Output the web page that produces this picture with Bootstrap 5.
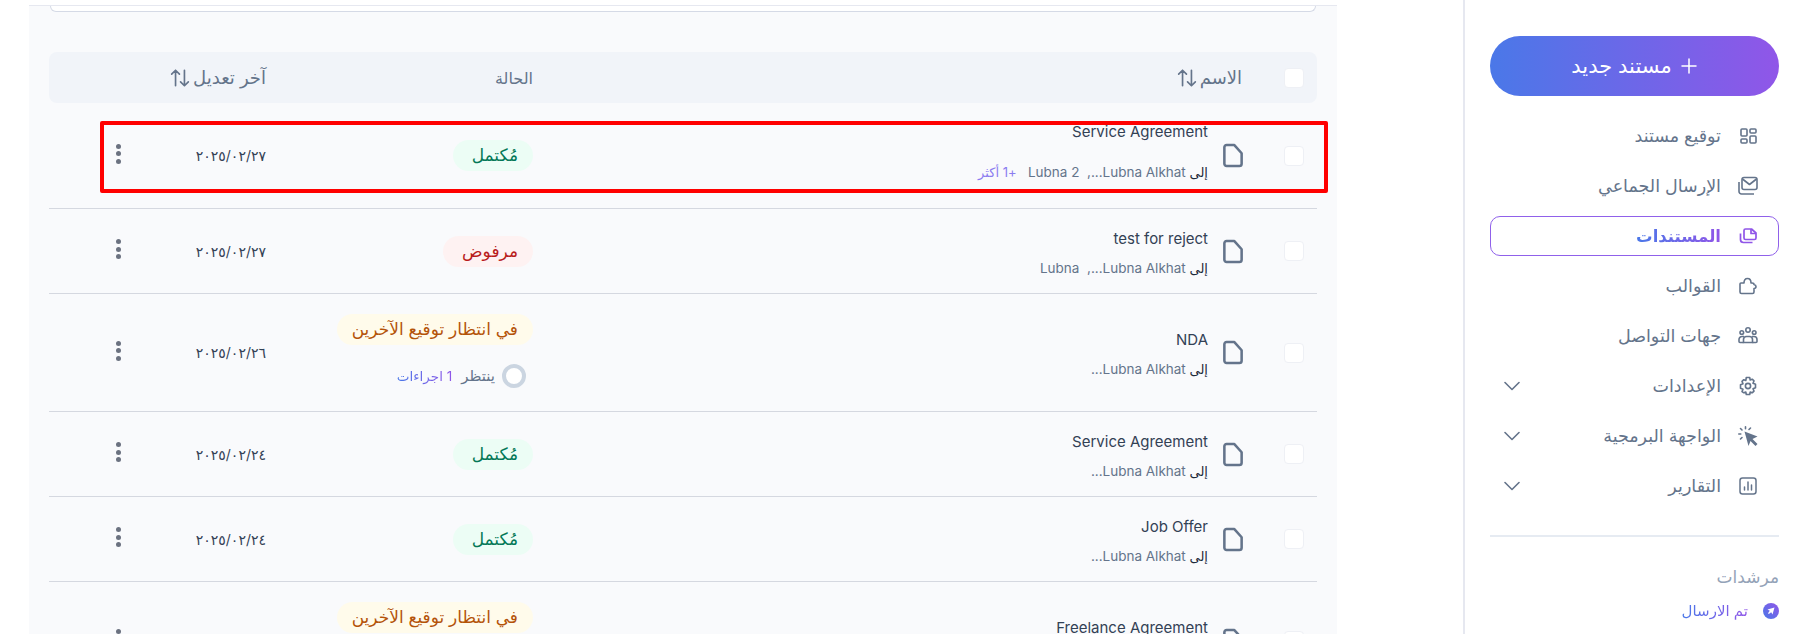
<!DOCTYPE html>
<html lang="ar" dir="rtl">
<head>
<meta charset="utf-8">
<title>المستندات</title>
<link rel="stylesheet" href="https://cdn.jsdelivr.net/npm/bootstrap@5.3.0/dist/css/bootstrap.min.css">
<style>
html,body{height:634px;overflow:hidden;background:#fff}
body{font-family:Inter,"Noto Sans","DejaVu Sans",sans-serif;font-size:16px;color:#334155}
.shell{height:634px}
.side{width:341px;flex:none;border-left:2px solid #e6e8f0;padding:36px 25px 0 25px}
.new-btn{height:60px;width:100%;border:0;border-radius:30px;color:#fff;font-size:21px;font-weight:400;background:linear-gradient(90deg,#4a78e8,#9056e8);margin-bottom:20px}
.new-btn svg{width:18px;height:18px}
.nav-row{height:40px;padding:0 20px 0 13px;color:#64748b;font-size:17.5px;border:1px solid transparent;border-radius:10px;margin-bottom:10px;text-decoration:none}
.nav-row .ico{width:20px;height:20px;flex:none;margin-left:17px}
.nav-row.is-on{border-color:#9061ea;font-weight:700;font-size:16.5px}
.grad-txt{background:linear-gradient(90deg,#4a78e8,#9056e8);-webkit-background-clip:text;background-clip:text;color:transparent}
.chev{width:16px;height:16px;margin-right:auto}
.side-sep{border-top:2px solid #e6ebf2;margin:29px 0 28px}
.side-label{color:#94a3b8;font-size:17px;letter-spacing:1px;line-height:24px;margin-bottom:12px}
.sent-row{font-size:15px;line-height:20px;gap:15px}
.sent-dot{width:16px;height:16px;flex:none}
.main-area{flex:1;padding:5px 126px 0 29px;min-width:0}
.panel{background:#f9fafc;border-top:1px solid #e6e8f0;padding:0 20px;height:640px}
.search-tail{height:6px;border:1px solid #d5dae6;border-top:0;border-radius:0 0 20px 20px;background:#fff;margin:0 1px 40px}
.head-row{height:51px;background:#f1f4f9;border-radius:8px;color:#64748b}
.doc-row{border-bottom:1px solid #d5d8e0;position:relative}
.h85{height:85px}.h106{height:106px}.h118{height:118px}
.c-check{width:46px;flex:none}
.box{display:block;width:20px;height:20px;background:#fff;border:1px solid #eef0f5;border-radius:4px}
.c-title{flex:1;min-width:0;padding-right:28px;gap:15px}
.file-ico{width:20px;height:25px;flex:none}
.name{font-size:15px;line-height:22px;color:#334155}
.sub{font-size:13.5px;line-height:20px;color:#64748b;margin-top:8px}
.txt-block{padding-top:3px}
.txt-wide{padding-top:0;padding-bottom:9px}
.sub .lead-word{color:#1e293b;font-size:13px}
.sub-wide{margin-top:19px}
.more{color:#8b7cf0;font-size:13px}
.c-status{width:267px;flex:none}
.c-date{width:116px;flex:none;color:#334155;font-size:14px}
.c-act{width:101px;flex:none;padding-right:29px}
.head-name{flex:1;padding-right:29px;font-size:18px}
.head-state{width:267px;flex:none}
.head-date{width:217px;flex:none;font-size:18px}
.pill-state{display:inline-block;height:31px;line-height:30px;border-radius:16px;padding:0 15px;font-size:17px}
.st-ok{background:#ecfdf5;color:#047857;padding-left:19px}
.st-no{background:#fef2f2;color:#b91c1c;padding-left:19px}
.st-wait{background:#fffbeb;color:#b45309}
.wait-line{margin:19px 0 4px;padding-right:7px;font-size:13.5px;line-height:24px;color:#64748b;gap:7px}
.wait-line .wait-word{font-size:15px;margin-left:2px}
.ring{width:24px;height:24px;border:4px solid #cbd5e1;border-radius:50%;background:#fff;flex:none}
.dots{width:5px;display:flex;flex-direction:column;gap:2.500px;margin-bottom:4px}
.dots i{display:block;width:5px;height:5px;border-radius:50%;background:#6b7280}
.sort{width:20px;height:20px;margin-right:3px;vertical-align:-4px}
.red-mark{position:absolute;top:18px;left:51px;right:-11px;height:72px;border:4px solid #f00;border-radius:2px;pointer-events:none}
</style>
</head>
<body>
<div class="d-flex shell">
<aside class="side">
  <button class="new-btn d-flex align-items-center justify-content-center gap-2" type="button">
    <svg viewBox="0 0 18 18" fill="none" stroke="#fff" stroke-width="1.5" stroke-linecap="round"><path d="M9 2v14M2 9h14"/></svg>
    <span>مستند جديد</span>
  </button>
  <a class="nav-row d-flex align-items-center" href="#"><svg class="ico" viewBox="0 0 20 20" fill="none" stroke="#64748b" stroke-width="1.6"><rect x="3" y="3" width="6" height="7" rx="1"/><rect x="12" y="3" width="6" height="4" rx="1"/><rect x="3" y="13" width="6" height="4" rx="1"/><rect x="12" y="10" width="6" height="7" rx="1"/></svg><span>توقيع مستند</span></a>
  <a class="nav-row d-flex align-items-center" href="#"><svg class="ico" viewBox="0 0 20 20" fill="none" stroke="#64748b" stroke-width="1.6" stroke-linejoin="round"><rect x="4" y="1.500" width="15" height="12" rx="2"/><path d="M4.500 3l7 5.500 7-5.500"/><path d="M1 6v9.500a2.500 2.500 0 0 0 2.500 2.500H16"/></svg><span>الإرسال الجماعي</span></a>
  <a class="nav-row is-on d-flex align-items-center" href="#"><svg class="ico" viewBox="0 0 20 20" fill="none" stroke="#9056e8" stroke-width="1.7" stroke-linejoin="round"><path d="M6 4.500a1.500 1.500 0 0 1 1.500-1.500h6l4.500 4v5a1.500 1.500 0 0 1-1.500 1.500h-9a1.500 1.500 0 0 1-1.500-1.500z"/><path d="M13 3v4.500h5"/><path d="M2.500 7.500v6a3 3 0 0 0 3 3h9"/></svg><span class="grad-txt">المستندات</span></a>
  <a class="nav-row d-flex align-items-center" href="#"><svg class="ico" viewBox="0 0 20 20" fill="none" stroke="#64748b" stroke-width="1.6" stroke-linejoin="round"><path d="M3.500 17.500Q2 17.500 2 16V8Q2 7 3 7H6Q6 2.500 9.500 2.500 13 2.500 13 7H14Q16 7 16 8.500 18 9 18 10.500 18 12.500 16 12.500V16Q16 17.500 14.500 17.500Z"/></svg><span>القوالب</span></a>
  <a class="nav-row d-flex align-items-center" href="#"><svg class="ico" viewBox="0 0 20 20" fill="none" stroke="#64748b" stroke-width="1.6"><circle cx="10" cy="4" r="2.200"/><circle cx="3.800" cy="6.500" r="1.800"/><circle cx="16.200" cy="6.500" r="1.800"/><path d="M5.500 16.500v-3a3 3 0 0 1 3-3h3a3 3 0 0 1 3 3v3z"/><path d="M5.500 16.500H2a1 1 0 0 1-1-1v-2a3 3 0 0 1 3-3h2M14.500 16.500H18a1 1 0 0 0 1-1v-2a3 3 0 0 0-3-3h-2"/></svg><span>جهات التواصل</span></a>
  <a class="nav-row d-flex align-items-center" href="#"><svg class="ico" viewBox="0 0 20 20" fill="none" stroke="#64748b" stroke-width="1.6" stroke-linejoin="round"><path d="M8.300 1.500h3.400l.5 2.500 2-.8 1.800 1.700-1 2.300 2.500 1v3.600l-2.500 1 1 2.300-1.800 1.700-2-.8-.5 2.500H8.300l-.5-2.500-2 .8L4 15.600l1-2.300-2.500-1V8.700l2.500-1-1-2.300 1.800-1.700 2 .8z"/><circle cx="10" cy="10" r="2.600"/></svg><span>الإعدادات</span><svg class="chev" viewBox="0 0 16 16" fill="none" stroke="#64748b" stroke-width="1.600" stroke-linecap="round" stroke-linejoin="round"><path d="M1 4.500l7 7 7-7"/></svg></a>
  <a class="nav-row d-flex align-items-center" href="#"><svg class="ico" viewBox="0 0 20 20"><path fill="#64748b" d="M6.500 5.500L19.500 10.500 14.500 13 19.500 18 17.500 20 12.500 15 10.500 20z"/><g stroke="#64748b" stroke-width="1.600" stroke-linecap="round"><path d="M7.500.8v2M2.500 2.500L4 4M.8 8h2M2.500 13L4 11.500M12.500 2L11 3.500"/></g></svg><span>الواجهة البرمجية</span><svg class="chev" viewBox="0 0 16 16" fill="none" stroke="#64748b" stroke-width="1.600" stroke-linecap="round" stroke-linejoin="round"><path d="M1 4.500l7 7 7-7"/></svg></a>
  <a class="nav-row d-flex align-items-center" href="#"><svg class="ico" viewBox="0 0 20 20" fill="none" stroke="#64748b" stroke-width="1.500" stroke-linecap="round"><rect x="2" y="2" width="16" height="16" rx="2.500"/><path d="M6.500 14v-3M10 14V6M13.500 14V9"/></svg><span>التقارير</span><svg class="chev" viewBox="0 0 16 16" fill="none" stroke="#64748b" stroke-width="1.600" stroke-linecap="round" stroke-linejoin="round"><path d="M1 4.500l7 7 7-7"/></svg></a>
  <div class="side-sep"></div>
  <div class="side-label">مرشدات</div>
  <div class="sent-row d-flex align-items-center"><svg class="sent-dot" viewBox="0 0 16 16"><defs><linearGradient id="gd" x1="1" y1="0" x2="0" y2="1"><stop offset="0" stop-color="#9056e8"/><stop offset="1" stop-color="#4a78e8"/></linearGradient></defs><circle cx="8" cy="8" r="8" fill="url(#gd)"/><path fill="#fff" d="M4.500 6.500L11.500 4.500 9.500 11.500 8.200 9.200 5.800 11 5 10.200 6.800 7.800z"/></svg><span class="grad-txt">تم الارسال</span></div>
</aside>

<main class="main-area">
<div class="panel">
  <div class="search-tail"></div>
  <div class="head-row d-flex align-items-center">
    <div class="c-check d-flex justify-content-center"><span class="box"></span></div>
    <div class="head-name">الاسم<svg class="sort" viewBox="0 0 18 18" fill="none" stroke="#64748b" stroke-width="1.500" stroke-linecap="round" stroke-linejoin="round"><path d="M5 16V2M1.500 5.500L5 2l3.500 3.500M13 2v14M9.500 12.500L13 16l3.500-3.500"/></svg></div>
    <div class="head-state">الحالة</div>
    <div class="head-date">آخر تعديل<svg class="sort" viewBox="0 0 18 18" fill="none" stroke="#64748b" stroke-width="1.500" stroke-linecap="round" stroke-linejoin="round"><path d="M5 16V2M1.500 5.500L5 2l3.500 3.500M13 2v14M9.500 12.500L13 16l3.500-3.500"/></svg></div>
  </div>

  <div class="doc-row h106 d-flex align-items-center">
    <div class="c-check d-flex justify-content-center"><span class="box"></span></div>
    <div class="c-title d-flex align-items-center">
      <svg class="file-ico" viewBox="0 0 22 26" fill="none" stroke="#64748b" stroke-width="2.800" stroke-linejoin="round"><path d="M4 1.500h8.500l8 9V22a2.500 2.500 0 0 1-2.500 2.500H4A2.500 2.500 0 0 1 1.500 22V4A2.500 2.500 0 0 1 4 1.500z"/></svg>
      <div class="txt-wide"><div class="name">Service Agreement</div><div class="sub sub-wide"><span class="lead-word">إلى</span> <span dir="ltr">Lubna 2 &nbsp;,...Lubna Alkhat</span> &nbsp; <span class="more">+1 أكثر</span></div></div>
    </div>
    <div class="c-status"><span class="pill-state st-ok">مُكتمل</span></div>
    <div class="c-date">٢٠٢٥/٠٢/٢٧</div>
    <div class="c-act"><div class="dots"><i></i><i></i><i></i></div></div>
    <div class="red-mark"></div>
  </div>

  <div class="doc-row h85 d-flex align-items-center">
    <div class="c-check d-flex justify-content-center"><span class="box"></span></div>
    <div class="c-title d-flex align-items-center">
      <svg class="file-ico" viewBox="0 0 22 26" fill="none" stroke="#64748b" stroke-width="2.800" stroke-linejoin="round"><path d="M4 1.500h8.500l8 9V22a2.500 2.500 0 0 1-2.500 2.500H4A2.500 2.500 0 0 1 1.500 22V4A2.500 2.500 0 0 1 4 1.500z"/></svg>
      <div class="txt-block"><div class="name">test for reject</div><div class="sub"><span class="lead-word">إلى</span> <span dir="ltr">Lubna &nbsp;,...Lubna Alkhat</span></div></div>
    </div>
    <div class="c-status"><span class="pill-state st-no">مرفوض</span></div>
    <div class="c-date">٢٠٢٥/٠٢/٢٧</div>
    <div class="c-act"><div class="dots"><i></i><i></i><i></i></div></div>
  </div>

  <div class="doc-row h118 d-flex align-items-center">
    <div class="c-check d-flex justify-content-center"><span class="box"></span></div>
    <div class="c-title d-flex align-items-center">
      <svg class="file-ico" viewBox="0 0 22 26" fill="none" stroke="#64748b" stroke-width="2.800" stroke-linejoin="round"><path d="M4 1.500h8.500l8 9V22a2.500 2.500 0 0 1-2.500 2.500H4A2.500 2.500 0 0 1 1.500 22V4A2.500 2.500 0 0 1 4 1.500z"/></svg>
      <div class="txt-block"><div class="name">NDA</div><div class="sub"><span class="lead-word">إلى</span> <span dir="ltr">...Lubna Alkhat</span></div></div>
    </div>
    <div class="c-status"><span class="pill-state st-wait">في انتظار توقيع الآخرين</span><div class="wait-line d-flex align-items-center"><span class="ring"></span><span class="wait-word">ينتظر</span><span class="grad-txt">1 اجراءات</span></div></div>
    <div class="c-date">٢٠٢٥/٠٢/٢٦</div>
    <div class="c-act"><div class="dots"><i></i><i></i><i></i></div></div>
  </div>

  <div class="doc-row h85 d-flex align-items-center">
    <div class="c-check d-flex justify-content-center"><span class="box"></span></div>
    <div class="c-title d-flex align-items-center">
      <svg class="file-ico" viewBox="0 0 22 26" fill="none" stroke="#64748b" stroke-width="2.800" stroke-linejoin="round"><path d="M4 1.500h8.500l8 9V22a2.500 2.500 0 0 1-2.500 2.500H4A2.500 2.500 0 0 1 1.500 22V4A2.500 2.500 0 0 1 4 1.500z"/></svg>
      <div class="txt-block"><div class="name">Service Agreement</div><div class="sub"><span class="lead-word">إلى</span> <span dir="ltr">...Lubna Alkhat</span></div></div>
    </div>
    <div class="c-status"><span class="pill-state st-ok">مُكتمل</span></div>
    <div class="c-date">٢٠٢٥/٠٢/٢٤</div>
    <div class="c-act"><div class="dots"><i></i><i></i><i></i></div></div>
  </div>

  <div class="doc-row h85 d-flex align-items-center">
    <div class="c-check d-flex justify-content-center"><span class="box"></span></div>
    <div class="c-title d-flex align-items-center">
      <svg class="file-ico" viewBox="0 0 22 26" fill="none" stroke="#64748b" stroke-width="2.800" stroke-linejoin="round"><path d="M4 1.500h8.500l8 9V22a2.500 2.500 0 0 1-2.500 2.500H4A2.500 2.500 0 0 1 1.500 22V4A2.500 2.500 0 0 1 4 1.500z"/></svg>
      <div class="txt-block"><div class="name">Job Offer</div><div class="sub"><span class="lead-word">إلى</span> <span dir="ltr">...Lubna Alkhat</span></div></div>
    </div>
    <div class="c-status"><span class="pill-state st-ok">مُكتمل</span></div>
    <div class="c-date">٢٠٢٥/٠٢/٢٤</div>
    <div class="c-act"><div class="dots"><i></i><i></i><i></i></div></div>
  </div>

  <div class="doc-row h118 d-flex align-items-center">
    <div class="c-check d-flex justify-content-center"><span class="box"></span></div>
    <div class="c-title d-flex align-items-center">
      <svg class="file-ico" viewBox="0 0 22 26" fill="none" stroke="#64748b" stroke-width="2.800" stroke-linejoin="round"><path d="M4 1.500h8.500l8 9V22a2.500 2.500 0 0 1-2.500 2.500H4A2.500 2.500 0 0 1 1.500 22V4A2.500 2.500 0 0 1 4 1.500z"/></svg>
      <div class="txt-block"><div class="name">Freelance Agreement</div><div class="sub"><span class="lead-word">إلى</span> <span dir="ltr">...Lubna Alkhat</span></div></div>
    </div>
    <div class="c-status"><span class="pill-state st-wait">في انتظار توقيع الآخرين</span><div class="wait-line d-flex align-items-center"><span class="ring"></span><span class="wait-word">ينتظر</span><span class="grad-txt">1 اجراءات</span></div></div>
    <div class="c-date">٢٠٢٥/٠٢/٢٤</div>
    <div class="c-act"><div class="dots"><i></i><i></i><i></i></div></div>
  </div>
</div>
</main>
</div>
<script src="https://cdn.jsdelivr.net/npm/bootstrap@5.3.0/dist/js/bootstrap.bundle.min.js"></script>
</body>
</html>
